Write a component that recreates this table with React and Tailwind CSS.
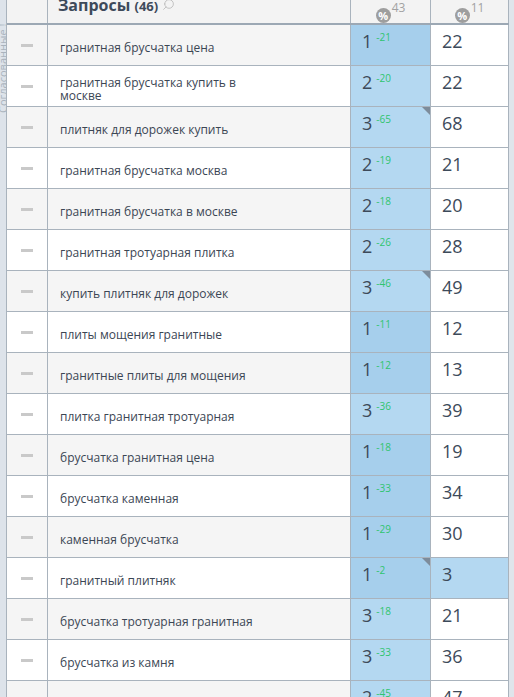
import { Search } from "lucide-react";

const rows = [
  { q: "гранитная брусчатка цена", pos: 1, d: -21, v: 22 },
  { q: "гранитная брусчатка купить в москве", pos: 2, d: -20, v: 22 },
  { q: "плитняк для дорожек купить", pos: 3, d: -65, v: 68, mark: true },
  { q: "гранитная брусчатка москва", pos: 2, d: -19, v: 21 },
  { q: "гранитная брусчатка в москве", pos: 2, d: -18, v: 20 },
  { q: "гранитная тротуарная плитка", pos: 2, d: -26, v: 28 },
  { q: "купить плитняк для дорожек", pos: 3, d: -46, v: 49, mark: true },
  { q: "плиты мощения гранитные", pos: 1, d: -11, v: 12 },
  { q: "гранитные плиты для мощения", pos: 1, d: -12, v: 13 },
  { q: "плитка гранитная тротуарная", pos: 3, d: -36, v: 39 },
  { q: "брусчатка гранитная цена", pos: 1, d: -18, v: 19 },
  { q: "брусчатка каменная", pos: 1, d: -33, v: 34 },
  { q: "каменная брусчатка", pos: 1, d: -29, v: 30 },
  { q: "гранитный плитняк", pos: 1, d: -2, v: 3, mark: true, hit: true },
  { q: "брусчатка тротуарная гранитная", pos: 3, d: -18, v: 21 },
  { q: "брусчатка из камня", pos: 3, d: -33, v: 36 },
  { q: "гранитная брусчатка для дорожек", pos: 2, d: -45, v: 47 },
];

const Pct = ({ n }) => (
  <div className="flex items-start justify-center pt-[2px]">
    <span className="mt-[6px] flex h-[15px] w-[15px] items-center justify-center rounded-full bg-[#9e9e9e] text-[11px] font-bold leading-none text-white">
      %
    </span>
    <span className="ml-[1px] text-[12px] leading-[12px] text-[#a2a2a2]">{n}</span>
  </div>
);

export default function App() {
  return (
    <div className="flex h-[697px] w-[514px] overflow-hidden bg-white font-['Open_Sans',sans-serif]">
      {/* боковая полоса */}
      <div className="relative w-[6px] shrink-0 overflow-hidden bg-[#dde3ea]">
        <div className="absolute left-[-4px] top-0 h-[113px] rotate-180 text-[11px] leading-[14px] text-[#a9b3bd] [writing-mode:vertical-rl]">
          Согласованные !
        </div>
      </div>

      <div className="flex shrink-0 flex-col border-l border-[#a9b3bd]">
        {/* шапка */}
        <div className="flex h-[25px] border-b-2 border-[#9ca8b4] bg-[#f3f3f3]">
          <div className="w-[41px] border-r border-[#a9b3bd]" />
          <div className="flex w-[303px] items-start border-r border-[#a9b3bd] pl-[10px]">
            <span className="-mt-[7px] text-[16px] font-bold text-[#3d4a5a]">
              Запросы <span className="text-[13px]">(46)</span>
            </span>
            <Search size={13} strokeWidth={1.5} className="-mt-[2px] ml-[4px] -scale-x-100 text-[#b8b8b8]" />
          </div>
          <div className="w-[80px] border-r border-[#a9b3bd]">
            <Pct n="43" />
          </div>
          <div className="w-[78px] border-r border-[#a9b3bd]">
            <Pct n="11" />
          </div>
        </div>

        {rows.map((r, i) => {
          const bg = i % 2 === 0 ? "bg-[#f5f5f5]" : "bg-white";
          const blue = r.pos === 1 ? "bg-[#a6cfec]" : "bg-[#b4d8f1]";
          return (
            <div key={i} className={`flex h-[41px] shrink-0 border-b border-[#a9b3bd] ${bg}`}>
              <div className="flex w-[41px] items-center justify-center border-r border-[#a9b3bd]">
                <span className="h-[3px] w-[12px] bg-[#c9c9c9]" />
              </div>
              <div className="flex w-[303px] items-center border-r border-[#a9b3bd] pl-[12px] pt-[5px]">
                <span className="w-[200px] text-[12px] leading-[13px] text-[#3b4654]">{r.q}</span>
              </div>
              <div className={`relative flex w-[80px] items-start border-r border-[#a9b3bd] pl-[11px] pt-[5px] ${blue}`}>
                <span className="text-[18px] leading-[22px] text-[#3d4a5a]">{r.pos}</span>
                <span className="ml-[4px] mt-[1px] text-[10px] leading-[12px] text-[#2fc46f]">{r.d}</span>
                {r.mark && (
                  <span className="absolute right-0 top-0 h-0 w-0 border-l-[8px] border-t-[8px] border-l-transparent border-t-[#7d8c9b]" />
                )}
              </div>
              <div className={`flex w-[78px] items-start border-r border-[#a9b3bd] pl-[11px] pt-[5px] ${r.hit ? "bg-[#b4d8f1]" : "bg-white"}`}>
                <span className="text-[18px] leading-[22px] text-[#3d4a5a]">{r.v}</span>
              </div>
            </div>
          );
        })}
      </div>

      <div className="flex-1 bg-[#dfe5eb]" />
    </div>
  );
}
